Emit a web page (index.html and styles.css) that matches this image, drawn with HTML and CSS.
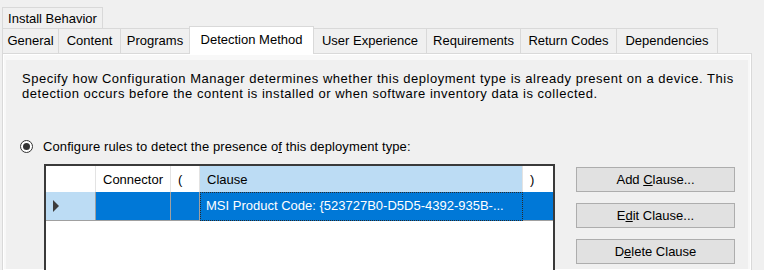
FILE: index.html
```html
<!DOCTYPE html>
<html lang="en">
<head>
  <meta charset="UTF-8" />
  <title>Detection Method</title>
  <link rel="stylesheet" href="styles.css">
</head>
<body>
  <div class="tabs">
    <div class="tab-row">
      <div class="tab tab-install">Install Behavior</div>
    </div>
    <div class="tab-row">
      <div class="tab" style="width: 57px">General</div>
      <div class="tab" style="width: 63px">Content</div>
      <div class="tab" style="width: 70px">Programs</div>
      <div class="tab active" style="width: 125px">Detection Method</div>
      <div class="tab" style="width: 114px">User Experience</div>
      <div class="tab" style="width: 95px">Requirements</div>
      <div class="tab" style="width: 97px">Return Codes</div>
      <div class="tab" style="width: 102px">Dependencies</div>
    </div>
  </div>

  <div class="panel">
    <p class="intro">
      Specify how Configuration Manager determines whether this deployment type is already present on a device. This<br>
      detection occurs before the content is installed or when software inventory data is collected.
    </p>

    <label class="radio">
      <span class="radio-box"><span class="radio-dot"></span></span>
      <span>Configure rules to detect the presence o<u>f</u> this deployment type:</span>
    </label>

    <div class="rules">
      <div class="grid">
        <div class="grid-row head">
          <div class="cell rowhead"></div>
          <div class="cell">Connector</div>
          <div class="cell">(</div>
          <div class="cell selected-col">Clause</div>
          <div class="cell">)</div>
        </div>
        <div class="grid-row data">
          <div class="cell rowhead"><span class="arrow"></span></div>
          <div class="cell"></div>
          <div class="cell"></div>
          <div class="cell focus">MSI Product Code: {523727B0-D5D5-4392-935B-...</div>
          <div class="cell"></div>
        </div>
      </div>

      <div class="buttons">
        <button>Add <u>C</u>lause...</button>
        <button>E<u>d</u>it Clause...</button>
        <button>D<u>e</u>lete Clause</button>
      </div>
    </div>
  </div>
</body>
</html>
```

FILE: styles.css
```css
body {
  margin: 0;
  width: 764px;
  height: 270px;
  overflow: hidden;
  background-color: #f0f0f0;
  color: #000000;
  font-family: "Liberation Sans", Arial, sans-serif;
  font-size: 13px;
}

/* tab strip */
.tabs {
  padding: 7px 0 0 2px;
}

.tab-row {
  display: flex;
  align-items: flex-end;
}

.tab {
  box-sizing: border-box;
  height: 25px;
  line-height: 24px;
  margin-right: -1px;
  text-align: center;
  white-space: nowrap;
  background-color: #f0f0f0;
  border: 1px solid #d9d9d9;
  border-bottom: none;
}

.tab-install {
  width: 101px;
  height: 21px;
  line-height: 21px;
}

.tab.active {
  position: relative;
  z-index: 1;
  height: 28px;
  line-height: 26px;
  margin-top: -2px;
  margin-bottom: -1px;
  background-color: #ffffff;
}

/* tab page */
.panel {
  box-sizing: border-box;
  width: 750px;
  height: 217px;
  margin-left: 2px;
  padding-top: 17px;
  background-color: #f0f0f0;
  border: 1px solid #d9d9d9;
  border-bottom: none;
  box-shadow: inset 0 0 0 1px #ffffff, inset 0 3px 0 3px #f8f8f8;
}

.intro {
  margin: 0 0 0 19px;
  line-height: 15px;
  letter-spacing: 0.52px;
}

.radio {
  display: flex;
  align-items: center;
  gap: 10px;
  margin: 38px 0 0 17px;
  height: 15px;
  letter-spacing: 0.1px;
}

.radio-box {
  box-sizing: border-box;
  width: 13px;
  height: 13px;
  border: 1px solid #333333;
  border-radius: 50%;
  display: flex;
  align-items: center;
  justify-content: center;
  background-color: #ffffff;
}

.radio-dot {
  width: 7px;
  height: 7px;
  border-radius: 50%;
  background-color: #333333;
}

/* rules grid + buttons */
.rules {
  display: flex;
  gap: 21px;
  margin: 10px 0 0 41px;
}

.grid {
  width: 511px;
  height: 106px;
  box-sizing: border-box;
  background-color: #ffffff;
  border: 2px solid #3a3a3a;
  border-bottom: none;
}

.grid-row {
  display: grid;
  grid-template-columns: 50px 75px 29px 323px 30px;
}

.cell {
  box-sizing: border-box;
  padding-left: 7px;
  white-space: nowrap;
  overflow: hidden;
  border-right: 1px solid #e3e3e3;
}

.cell:last-child {
  border-right: none;
}

.head .cell {
  height: 26px;
  line-height: 28px;
}

.head .selected-col {
  background-color: #bcdcf4;
}

.data .cell {
  height: 29px;
  line-height: 28px;
  color: #ffffff;
  background-color: #0078d7;
  border-right-color: #a0a0a0;
  border-bottom: 1px solid #a0a0a0;
}

.data .rowhead {
  background-color: #bcdcf4;
  display: flex;
  align-items: center;
}

.arrow {
  width: 0;
  height: 0;
  border-left: 6px solid #3c3c3c;
  border-top: 6px solid transparent;
  border-bottom: 6px solid transparent;
}

.data .focus {
  padding-left: 5px;
  border: 1px dotted #2a2a2a;
  line-height: 26px;
}

.buttons {
  display: flex;
  flex-direction: column;
  gap: 11px;
  padding-top: 3px;
}

button {
  width: 159px;
  height: 25px;
  padding: 0;
  font-family: inherit;
  font-size: 13px;
  color: #000000;
  background-color: #e1e1e1;
  border: 1px solid #adadad;
  border-radius: 0;
}
```
